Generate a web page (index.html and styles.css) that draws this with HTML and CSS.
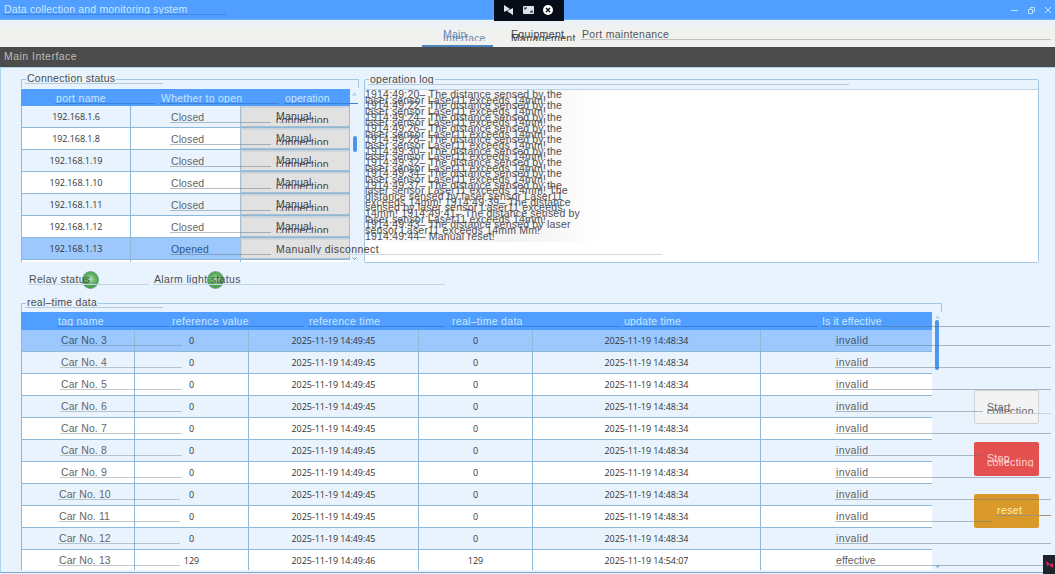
FILE: index.html
```html
<!DOCTYPE html>
<html lang="en">
<head>
    <meta charset="UTF-8">
    <title>Data collection and monitoring system</title>
    <link rel="stylesheet" href="styles.css">
</head>
<body>
    <div class="titlebar">
        <span class="label title-label">Data collection and monitoring system</span>
        <svg class="window-buttons" width="44" height="12" viewBox="0 0 44 12" fill="none" stroke="#b8e4ff" stroke-width="1">
            <path d="M3 6.5H10"/>
            <path d="M20.5 5.5h4v4h-4zM22.5 5.5v-2h4v4h-2"/>
            <path d="M37 3l6 6M43 3l-6 6"/>
        </svg>
        <!-- Remote session toolbar -->
        <div class="session-bar">
            <svg width="54" height="14" viewBox="0 0 54 14">
                <path d="M2 2l6 4-6 3zM11 5v7l-6-4z" fill="#dfe3e8"/>
                <rect x="21" y="3" width="11" height="8" rx="1" fill="#dfe3e8"/>
                <path d="M23 6.5V5h2M30 7.5V9h-2" stroke="#0b1118" stroke-width="1.2" fill="none"/>
                <circle cx="46" cy="7" r="5" fill="#fff"/>
                <path d="M44 5l4 4M48 5l-4 4" stroke="#0b1118" stroke-width="1.4"/>
            </svg>
        </div>
    </div>

    <div class="nav">
        <div class="tab active"><span class="label two-line">Main<br>Interface</span></div>
        <div class="tab equipment"><span class="label two-line">Equipment<br>Management</span></div>
        <div class="tab port"><span class="label port-label">Port maintenance</span></div>
    </div>
    <div class="page-title">Main Interface</div>

    <div class="main">
        <div class="top-row">
            <div class="group connection">
                <div class="legend"><span class="label legend-label">Connection status</span></div>
                <div class="connection-body">
                    <div class="connection-table">
                        <div class="row head">
                            <div><span class="label h-port">port name</span></div>
                            <div><span class="label h-open">Whether to open</span></div>
                            <div><span class="label h-op">operation</span></div>
                        </div>
                        <div id="ports"></div>
                    </div>
                    <div class="scroll">
                        <svg width="7" height="4" viewBox="0 0 7 4"><path d="M1 3.5l2.5-3 2.5 3z" fill="#a9cff5"/></svg>
                        <i class="thumb"></i>
                        <svg class="down" width="7" height="4" viewBox="0 0 7 4"><path d="M1.5 .5l2 2 2-2" fill="none" stroke="#4a91d4"/></svg>
                    </div>
                </div>
            </div>
            <div class="group log">
                <div class="legend"><span class="label legend-label">operation log</span></div>
                <div class="log-body">
                    <div class="log-text" id="log"></div>
                </div>
            </div>
        </div>

        <div class="status-row">
            <div class="status relay"><span class="label relay-label">Relay status</span><i class="lamp"></i></div>
            <div class="status alarm"><span class="label alarm-label">Alarm light status</span><i class="lamp"></i></div>
        </div>

        <div class="bottom-row">
            <div class="group realtime">
                <div class="legend"><span class="label legend-label">real–time data</span></div>
                <div class="data-body">
                    <div class="data-table">
                        <div class="row head">
                            <div><span class="label h-tag">tag name</span></div>
                            <div><span class="label h-ref">reference value</span></div>
                            <div><span class="label h-reft">reference time</span></div>
                            <div><span class="label h-real">real–time data</span></div>
                            <div><span class="label h-upd">update time</span></div>
                            <div><span class="label h-eff">Is it effective</span></div>
                        </div>
                        <div id="tags"></div>
                    </div>
                    <div class="scroll">
                        <svg width="7" height="4" viewBox="0 0 7 4"><path d="M1 3.5l2.5-3 2.5 3z" fill="#a9cff5"/></svg>
                        <i class="thumb"></i>
                        <svg class="down" width="7" height="4" viewBox="0 0 7 4"><path d="M1 .5l2.5 3 2.5-3z" fill="#8dc0f0"/></svg>
                    </div>
                </div>
            </div>
            <div class="actions">
                <button class="button start"><span class="label two-line">Start<br>collection</span></button>
                <button class="button stop"><span class="label two-line">Stop<br>collecting</span></button>
                <button class="button reset"><span class="label reset-label">reset</span></button>
            </div>
        </div>
    </div>
    <div class="corner">
        <svg width="12" height="19" viewBox="0 0 12 19"><path d="M3 6l4 3-3 2zM10 8v5l-4-3z" fill="#e0245e"/></svg>
    </div>

    <script>
        const ports = ['6', '8', '19', '10', '11', '12', '13'];

        const tags = [3, 4, 5, 6, 7, 8, 9, 10, 11, 12, 13];

        // length of the rule under the last column, shortened beside the buttons
        const ruleWidths = { 6: 148, 8: 146, 11: 157 };

        const log = [];
        [20, 22, 24, 26, 28, 30, 32, 34, 37].forEach(s => {
            log.push(`1914:49:${s}– The distance sensed by the`);
            log.push('laser sensor Laser11 exceeds 14mm!' + (s === 37 ? ' The' : ''));
        });
        log.push(
            'distance sensed by laser sensor Laser11',
            'exceeds 14mm! 1914:49:39– The distance',
            'sensed by laser sensor Laser11 exceeds',
            '14mm! 1914:49:41– The distance sensed by',
            'laser sensor Laser11 exceeds 14mm!',
            '1914:49:43– The distance sensed by laser',
            'sensor Laser11 exceeds 14mm Mm!',
            '1914:49:44– Manual reset!'
        );

        document.getElementById('ports').innerHTML = ports.map(p => {
            const open = p === '13';
            return `
                <div class="row ${open ? 'selected' : ''}">
                    <div class="num">192.168.1.${p}</div>
                    <div><span class="label state">${open ? 'Opened' : 'Closed'}</span></div>
                    <div class="op">${open
                        ? '<span class="label disconnect">Manually disconnect</span>'
                        : '<span class="label two-line">Manual<br>connection</span>'}</div>
                </div>`;
        }).join('') + '<div class="row"><div></div><div></div><div></div></div>';

        document.getElementById('log').innerHTML = log.map(l => `<div>${l}</div>`).join('');

        document.getElementById('tags').innerHTML = tags.map((n, i) => {
            const last = n === 13;
            return `
                <div class="row ${i === 0 ? 'selected' : ''}">
                    <div class="tag ${n > 9 ? 'wide' : ''}"><span class="label">Car No. ${n}</span></div>
                    <div class="num">${last ? 129 : 0}</div>
                    <div class="num">2025-11-19 14:49:${last ? 46 : 45}</div>
                    <div class="num">${last ? 129 : 0}</div>
                    <div class="num">2025-11-19 14:${last ? '54:07' : '48:34'}</div>
                    <div class="effective"><span class="label" style="--rule: ${ruleWidths[n] || 216}px">${last ? 'effective' : 'invalid'}</span></div>
                </div>`;
        }).join('');
    </script>
</body>
</html>
```
FILE: styles.css
```css
* {
    box-sizing: border-box;
    margin: 0;
    padding: 0;
}

body {
    width: 1055px;
    height: 574px;
    overflow: hidden;
    background: #e8f3fd;
    color: #555;
    font-family: "Liberation Sans", Arial, sans-serif;
    font-size: 10.5px;
    letter-spacing: 0.2px;
    position: relative;
}

/* text with a thin rule below that runs past it */
.label {
    position: relative;
    display: inline-block;
    height: 12px;
    line-height: 12px;
    white-space: nowrap;
}

.label::after {
    content: "";
    position: absolute;
    z-index: 3;
    left: -1px;
    bottom: 0;
    width: var(--rule, 0);
    height: 1px;
    background: var(--rule-color, rgba(90, 110, 125, 0.45));
}

.two-line {
    height: 13px;
    line-height: 4px;
    padding-top: 4px;
    overflow: hidden;
}

.titlebar {
    position: relative;
    display: flex;
    justify-content: space-between;
    align-items: center;
    height: 20px;
    padding: 0 3px 0 4px;
    background: #509eff;
    color: #cbe6ff;
    border-bottom: 1px solid #6fb0fb;
}

.title-label {
    --rule: 223px;
    --rule-color: #3f86dc;
    height: 11px;
    line-height: 10px;
    letter-spacing: 0.16px;
}

.session-bar {
    position: absolute;
    z-index: 5;
    left: 494px;
    top: 0;
    width: 70px;
    height: 21px;
    padding: 3px 8px;
    background: #070d16;
}

.nav {
    display: flex;
    height: 27px;
    padding-left: 422px;
    background: linear-gradient(#eaf2f8, #f1f1f0 10px);
}

.tab {
    padding-top: 8px;
}

.tab.active {
    width: 71px;
    padding-left: 21px;
    color: #6689b3;
    border-bottom: 2px solid #4d86bd;
}

.tab.equipment {
    width: 89px;
    padding-left: 18px;
    color: #444;
}

.equipment .label {
    width: 66px;
    letter-spacing: 0.35px;
}

.port-label {
    --rule: 470px;
    --rule-color: #bfc3c0;
    letter-spacing: 0.3px;
}

.page-title {
    height: 20px;
    padding-left: 4px;
    line-height: 19px;
    background: #4b4b4b;
    color: #bbb;
    letter-spacing: 0.47px;
}

.main {
    height: 506px;
    padding: 11px 0 0 20px;
    border-left: 1px solid #a9d5ee;
    border-top: 1px solid #a9d5ee;
    border-bottom: 1px solid #7fa7cc;
}

.top-row {
    display: flex;
    gap: 5px;
    height: 184px;
}

.group {
    position: relative;
    border: 1px solid #a3c6e2;
}

.legend {
    display: flex;
    height: 9px;
    padding-left: 4px;
}

.legend-label {
    --rule: 138px;
    --rule-color: #b5cadb;
    top: -8px;
    padding: 0 1px;
    background: #e8f3fd;
    color: #4c4c4c;
    letter-spacing: 0.25px;
}

.connection {
    z-index: 2;
    width: 338px;
    border-right: 0;
    border-bottom: 0;
    border-left: 0;
}

.connection .legend,
.realtime .legend {
    padding-left: 5px;
}

.connection-body,
.data-body {
    display: flex;
}

.connection-table {
    width: 329px;
    height: 173px;
}

#ports {
    height: 156px;
    overflow-x: visible;
    overflow-y: clip;
}

.row {
    display: grid;
    height: 22px;
    background: #fff;
    border-bottom: 1px solid #8db8d8;
}

.row:nth-child(odd) {
    background: #e9f3fd;
}

.row > div {
    display: flex;
    align-items: center;
    border-left: 1px solid #8db8d8;
}

.connection .row {
    grid-template-columns: 109px 110px 110px;
}

.row.selected {
    background: #9cc8fe;
}

.row.head {
    height: 17px;
    background: #509eff;
    color: #c8e6ff;
    border: 0;
    --rule-color: #3b82d8;
}

.row.head > div {
    border-color: transparent;
}

.num {
    justify-content: center;
    color: #333;
    font-family: "Open Sans", "Noto Sans", sans-serif;
    font-size: 9px;
    letter-spacing: -0.05px;
}

.h-port {
    --rule: 100px;
    margin-left: 34px;
    letter-spacing: 0.3px;
}

.h-open {
    --rule: 119px;
    margin-left: 30px;
    margin-top: 1px;
    letter-spacing: 0.25px;
}

.h-op {
    --rule: 74px;
    margin-left: 44px;
    margin-top: 1px;
    letter-spacing: 0.1px;
}

.state {
    --rule: 101px;
    margin-left: 40px;
    color: #666;
    letter-spacing: 0.1px;
}

.selected .state {
    color: #345878;
}

.connection .op {
    position: relative;
    padding-left: 35px;
    background: #e1e1e2;
    color: #444;
    border: 1px solid #a8bfd2;
    border-top-color: #c7d2da;
    box-shadow: inset 1px 1px 0 #d2d6d9;
}

.op .two-line {
    width: 54px;
}

.op .disconnect {
    --rule: 387px;
    --rule-color: #d2dbe0;
    z-index: 4;
    letter-spacing: 0.42px;
}

.scroll {
    display: flex;
    flex-direction: column;
    align-items: center;
    width: 11px;
    padding-top: 3px;
}

.thumb {
    width: 4px;
    height: 16px;
    margin-top: 40px;
    border-radius: 2px;
    background: #4b97ed;
}

.scroll .down {
    margin-top: auto;
}

.connection .down {
    margin-bottom: 1px;
}

.log {
    width: 675px;
    border-radius: 2px;
}

.log .legend-label {
    --rule: 481px;
    top: -7px;
}

.log-body {
    height: 173px;
    border-top: 1px solid #bcd5eb;
    background: #fff;
}

.log-text {
    width: 235px;
    height: 152px;
    padding: 2px 0 0;
    background: linear-gradient(90deg, #fafafa 0, #f3f3f3 60%, #f5f5f4 75%, #fff);
    color: #505050;
    letter-spacing: 0.2px;
}

.log-text div {
    height: 5.68px;
    line-height: 5.68px;
    white-space: nowrap;
}

.status-row {
    display: flex;
    height: 40px;
    padding: 10px 0 0 8px;
}

.status {
    position: relative;
    height: 18px;
    color: #4f4f4f;
}

/* the caption stays readable on top of the lamp */
.status .label {
    z-index: 1;
}

.relay {
    width: 125px;
}

.relay-label {
    --rule: 121px;
    --rule-color: #c3d2df;
    letter-spacing: 0.3px;
}

.alarm-label {
    --rule: 292px;
    --rule-color: #c3d2df;
    letter-spacing: 0.35px;
}

.lamp {
    position: absolute;
    left: 53px;
    top: -2px;
    width: 17px;
    height: 18px;
    border-radius: 50%;
    background: radial-gradient(circle at 50% 45%, #b4e2ad 0, #6cba69 30%, #3f9a44 60%, #2f7d36 100%);
    opacity: 0.9;
    border: 1px solid #66a36c;
}

.bottom-row {
    display: flex;
    align-items: flex-start;
    height: 268px;
}

.realtime {
    width: 921px;
    height: 267px;
    border-bottom: 0;
    border-left: 0;
    border-right: 0;
}

.realtime .legend {
    height: 8px;
}

/* short ends of the frame */
.realtime::before,
.realtime::after,
.connection::before,
.connection::after {
    content: "";
    position: absolute;
    top: 0;
    width: 1px;
    height: 8px;
    background: #a3c6e2;
}

.realtime::before,
.connection::before {
    left: 0;
}

.realtime::after,
.connection::after {
    right: 0;
}

.data-table {
    width: 911px;
    height: 257px;
}

#tags {
    height: 239px;
}

.data-table .row {
    grid-template-columns: 113px 114px 170px 114px 228px 172px;
}

.data-table .row.head {
    height: 18px;
    padding-bottom: 1px;
}

#tags .row:last-child {
    height: 20px;
    border: 0;
}

#tags .row:nth-child(even) {
    background: #e9f3fd;
}

#tags .row:nth-child(odd):not(.selected) {
    background: #fff;
}

.h-tag {
    --rule: 113px;
    margin-left: 36px;
    letter-spacing: 0.25px;
}

.h-ref {
    --rule: 133px;
    margin-left: 37px;
    letter-spacing: 0.3px;
}

.h-reft {
    --rule: 137px;
    margin-left: 60px;
    letter-spacing: 0.3px;
}

.h-real {
    --rule: 170px;
    margin-left: 33px;
    letter-spacing: 0.3px;
}

.h-upd {
    --rule: 195px;
    margin-left: 91px;
}

.h-eff {
    --rule: 229px;
    --rule-color: rgba(90, 110, 125, 0.5);
    margin-left: 61px;
    letter-spacing: 0.1px;
}

.tag {
    padding-left: 39px;
    padding-bottom: 1px;
    color: #666;
}

.tag.wide {
    padding-left: 37px;
}

.tag .label {
    --rule: 122px;
    --rule-color: rgba(120, 135, 145, 0.45);
    letter-spacing: 0.1px;
}

.effective {
    padding-left: 75px;
    padding-bottom: 1px;
    color: #606060;
}

.effective .label {
    letter-spacing: 0.4px;
}

#tags .row:last-child .effective .label {
    letter-spacing: 0.1px;
}

.selected .tag,
.selected .effective {
    color: #3f566f;
}

.realtime .thumb {
    height: 50px;
    margin-top: 1px;
}

.actions {
    display: flex;
    flex-direction: column;
    gap: 18px;
    padding: 87px 0 0 32px;
}

.button {
    display: flex;
    align-items: center;
    width: 65px;
    height: 34px;
    padding-left: 13px;
    border: 0;
    border-radius: 2px;
    font: inherit;
    letter-spacing: 0.3px;
    text-align: left;
}

.start {
    background: #f3f3f3;
    color: #666;
    border: 1px solid #cfd3d6;
    padding-left: 12px;
}

.start .label {
    --rule: 65px;
    overflow: visible;
    clip-path: inset(0 -20px 0 0);
}

.stop {
    background: #e3504f;
    color: #ffd5d2;
}

.stop .label {
    height: 15px;
}

.reset {
    background: #d99a2b;
    color: #ffedb9;
    padding-left: 23px;
}

.reset-label {
    --rule: 55px;
    --rule-color: #a3926b;
    top: -1px;
    letter-spacing: 0.4px;
}

.corner {
    position: absolute;
    z-index: 5;
    right: 0;
    bottom: 0;
    width: 12px;
    height: 19px;
    background: #20242a;
}
```
